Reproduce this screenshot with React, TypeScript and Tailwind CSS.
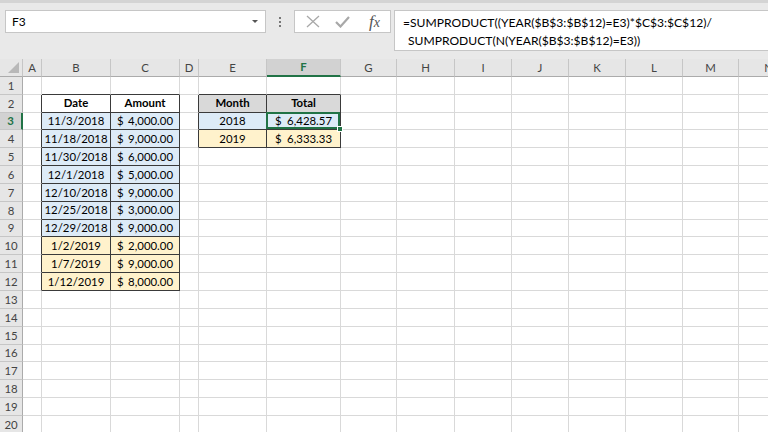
import React from "react";

const COLS = ["A", "B", "C", "D", "E", "F", "G", "H", "I", "J", "K", "L", "M", "N"];

type Cell = { text?: string; amount?: string; bold?: boolean; fill?: string };

const data: Record<string, Cell> = {
  B2: { text: "Date", bold: true, fill: "w" },
  C2: { text: "Amount", bold: true, fill: "w" },
  E2: { text: "Month", bold: true, fill: "g" },
  F2: { text: "Total", bold: true, fill: "g" },
  E3: { text: "2018", fill: "b" },
  F3: { amount: "6,428.57", fill: "b" },
  E4: { text: "2019", fill: "y" },
  F4: { amount: "6,333.33", fill: "y" },
};

const rowsB = [
  ["11/3/2018", "4,000.00"],
  ["11/18/2018", "9,000.00"],
  ["11/30/2018", "6,000.00"],
  ["12/1/2018", "5,000.00"],
  ["12/10/2018", "9,000.00"],
  ["12/25/2018", "3,000.00"],
  ["12/29/2018", "9,000.00"],
  ["1/2/2019", "2,000.00"],
  ["1/7/2019", "9,000.00"],
  ["1/12/2019", "8,000.00"],
];
rowsB.forEach((r, i) => {
  const row = i + 3;
  const fill = row <= 9 ? "b" : "y";
  data["B" + row] = { text: r[0], fill };
  data["C" + row] = { amount: r[1], fill };
});

function inTable(col: number, row: number) {
  if (row >= 2 && row <= 12 && (col === 1 || col === 2)) return true;
  if (row >= 2 && row <= 4 && (col === 4 || col === 5)) return true;
  return false;
}

const fillClass: Record<string, string> = {
  w: "bg-white",
  g: "bg-[#d9d9d9]",
  b: "bg-[#ddebf7]",
  y: "bg-[#fff2cc]",
};

function GridCell({ col, row }: { col: number; row: number }) {
  const key = COLS[col] + row;
  const d = data[key];
  const rightDark = inTable(col, row) || inTable(col + 1, row);
  const bottomDark = inTable(col, row) || inTable(col, row + 1);
  const isAmountF = key === "F3" || key === "F4";
  return (
    <div
      className={[
        "relative flex items-center border-r border-b min-w-0 text-black",
        rightDark ? "border-r-[#3a3a3a]" : "border-r-[#d9d9d9]",
        bottomDark ? "border-b-[#3a3a3a]" : "border-b-[#d9d9d9]",
        d && d.fill ? fillClass[d.fill] : "bg-white",
        d && d.bold ? "font-bold" : "",
      ].join(" ")}
    >
      {d && d.text && <span className="w-full text-center leading-none">{d.text}</span>}
      {d && d.amount && (
        <div
          className={
            isAmountF
              ? "flex w-full justify-between pl-[8px] pr-[8px] leading-none"
              : "flex w-full justify-between pl-[6px] pr-[6px] leading-none"
          }
        >
          <span>$</span>
          <span>{d.amount}</span>
        </div>
      )}
      {key === "F3" && (
        <>
          <div className="absolute -left-[1px] -top-[1px] right-0 bottom-0 border-2 border-[#217346]" />
          <div className="absolute -right-[3px] -bottom-[3px] w-[6px] h-[6px] bg-[#217346] border border-white z-10" />
        </>
      )}
    </div>
  );
}

export default function App() {
  const rows = Array.from({ length: 20 }, (_, i) => i + 1);
  return (
    <div
      className="w-[768px] h-[432px] overflow-hidden bg-white text-[12px]"
      style={{ fontFamily: "Lato, 'Open Sans', sans-serif" }}
    >
      {/* formula bar area */}
      <div className="h-[59px] bg-[#e9e9e9] border-t-[3px] border-t-[#d4d4d4] relative">
        <div className="flex items-start pt-[7px] pl-[5px]">
          <div className="w-[261px] h-[23px] bg-white border border-[#c6c6c6] flex items-center pl-[6px] pr-[6px] justify-between">
            <span className="text-[12px] text-black">F3</span>
            <svg width="8" height="5" viewBox="0 0 8 5">
              <polygon points="1,1 7,1 4,4" fill="#555" />
            </svg>
          </div>
          <div className="w-[28px] h-[23px] flex flex-col items-center justify-center gap-[2px]">
            <div className="w-[2px] h-[2px] bg-[#777]" />
            <div className="w-[2px] h-[2px] bg-[#777]" />
            <div className="w-[2px] h-[2px] bg-[#777]" />
          </div>
          <div className="w-[97px] h-[23px] bg-white border border-[#c6c6c6] flex items-center pl-[11px] gap-[15px]">
            <svg width="14" height="13" viewBox="0 0 14 13">
              <path d="M1 1 L13 12 M13 1 L1 12" stroke="#a8a8a8" strokeWidth="1.3" fill="none" />
            </svg>
            <svg width="15" height="13" viewBox="0 0 15 13">
              <path d="M1 7 L5.5 11.5 L14 2" stroke="#a8a8a8" strokeWidth="2.2" fill="none" />
            </svg>
            <span
              className="text-[17px] italic text-[#555] leading-none ml-[4px]"
              style={{ fontFamily: "'Liberation Serif', serif" }}
            >
              <span>f</span>
              <span className="text-[14px]">x</span>
            </span>
          </div>
          <div className="ml-[3px] flex-1 h-[41px] bg-white border border-[#c6c6c6] border-r-0 pl-[8px] pt-[3px] text-[12.1px] leading-[18px] text-black">
            <div>=SUMPRODUCT((YEAR($B$3:$B$12)=E3)*$C$3:$C$12)/</div>
            <div className="pl-[5px]">SUMPRODUCT(N(YEAR($B$3:$B$12)=E3))</div>
          </div>
        </div>
      </div>

      {/* grid */}
      <div className="grid grid-cols-[23px_19px_69px_69px_19px_68px_74px_56px_58px_57px_57px_57px_57px_56px_60px] auto-rows-[17.85px] text-[11.4px]">
        <div className="relative bg-[#e6e6e6] border-r border-b border-r-[#c6c6c6] border-b-[#ababab] h-[18px]">
          <svg className="absolute right-[3px] bottom-[3px]" width="11" height="11" viewBox="0 0 11 11">
            <polygon points="11,0 11,11 0,11" fill="#b8b8b8" />
          </svg>
        </div>
        {COLS.map((c) =>
          c === "F" ? (
            <div
              key={c}
              className="h-[18px] bg-[#d2d2d2] border-r border-r-[#c6c6c6] border-b-2 border-b-[#217346] flex items-center justify-center text-[#217346] font-bold"
            >
              {c}
            </div>
          ) : (
            <div
              key={c}
              className="h-[18px] bg-[#e6e6e6] border-r border-r-[#c6c6c6] border-b border-b-[#ababab] flex items-center justify-center text-[#444]"
            >
              {c}
            </div>
          )
        )}
        {rows.map((r) => (
          <React.Fragment key={r}>
            {r === 3 ? (
              <div className="bg-[#d2d2d2] border-r-2 border-r-[#217346] border-b border-b-[#c6c6c6] flex items-center justify-center text-[#217346] font-bold">
                {r}
              </div>
            ) : (
              <div className="bg-[#e6e6e6] border-r border-r-[#ababab] border-b border-b-[#c6c6c6] flex items-center justify-center text-[#444]">
                {r}
              </div>
            )}
            {COLS.map((_, ci) => (
              <GridCell key={ci} col={ci} row={r} />
            ))}
          </React.Fragment>
        ))}
      </div>
    </div>
  );
}
